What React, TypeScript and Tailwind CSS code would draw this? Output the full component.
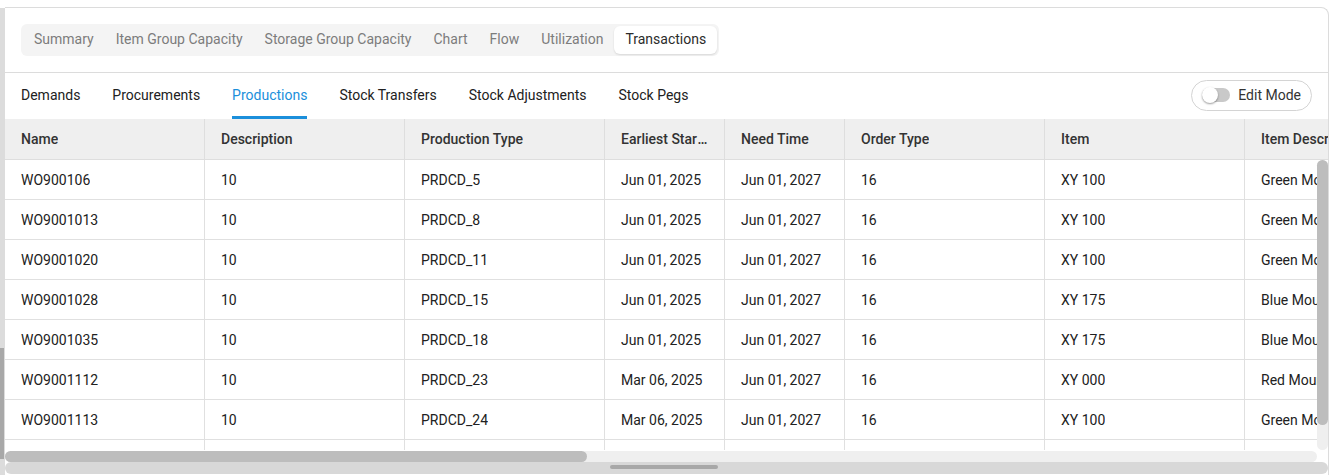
import React from "react";

const topTabs = ["Summary", "Item Group Capacity", "Storage Group Capacity", "Chart", "Flow", "Utilization", "Transactions"];
const subTabs = ["Demands", "Procurements", "Productions", "Stock Transfers", "Stock Adjustments", "Stock Pegs"];

const columns = [
  { label: "Name", width: "w-[200px]" },
  { label: "Description", width: "w-[200px]" },
  { label: "Production Type", width: "w-[200px]" },
  { label: "Earliest Start Time", width: "w-[120px]" },
  { label: "Need Time", width: "w-[120px]" },
  { label: "Order Type", width: "w-[200px]" },
  { label: "Item", width: "w-[200px]" },
  { label: "Item Description", width: "w-[200px]" },
];

const rows = [
  ["WO900106", "10", "PRDCD_5", "Jun 01, 2025", "Jun 01, 2027", "16", "XY 100", "Green Mountain Bike"],
  ["WO9001013", "10", "PRDCD_8", "Jun 01, 2025", "Jun 01, 2027", "16", "XY 100", "Green Mountain Bike"],
  ["WO9001020", "10", "PRDCD_11", "Jun 01, 2025", "Jun 01, 2027", "16", "XY 100", "Green Mountain Bike"],
  ["WO9001028", "10", "PRDCD_15", "Jun 01, 2025", "Jun 01, 2027", "16", "XY 175", "Blue Mountain Bike"],
  ["WO9001035", "10", "PRDCD_18", "Jun 01, 2025", "Jun 01, 2027", "16", "XY 175", "Blue Mountain Bike"],
  ["WO9001112", "10", "PRDCD_23", "Mar 06, 2025", "Jun 01, 2027", "16", "XY 000", "Red Mountain Bike"],
  ["WO9001113", "10", "PRDCD_24", "Mar 06, 2025", "Jun 01, 2027", "16", "XY 100", "Green Mountain Bike"],
  ["WO9001114", "10", "PRDCD_25", "Mar 06, 2025", "Jun 01, 2027", "16", "XY 100", "Green Mountain Bike"],
];

export default function App() {
  return (
    <div className="h-[475px] w-[1333px] overflow-hidden bg-white pt-[7px] font-['Roboto',sans-serif] text-sm">
      <div className="flex h-[468px]">
        {/* page scrollbar on the left */}
        <div className="mt-px flex h-[467px] w-[5px] flex-col bg-[#dcdcdc]">
          <div className="mt-[340px] h-[111px] w-[4px] bg-[#a8a8a8]" />
        </div>

        <div className="flex w-[1324px] flex-col rounded-tr-lg border-t border-r border-[#dcdcdc]">
          {/* top tabs */}
          <div className="border-b border-[#dcdcdc] px-4 py-4">
            <div className="flex h-8 w-fit items-center rounded-md bg-[#f4f4f4] px-[2px]">
              {topTabs.map((tab) =>
                tab === "Transactions" ? (
                  <div key={tab} className="flex h-7 items-center rounded-md bg-white px-[11px] pb-[2px] text-[#2b2b2b] shadow-[0_1px_2px_rgba(0,0,0,0.12)]">
                    {tab}
                  </div>
                ) : (
                  <div key={tab} className="flex h-7 items-center px-[11px] pb-[2px] text-[#7c7c7c]">
                    {tab}
                  </div>
                )
              )}
            </div>
          </div>

          {/* sub tabs */}
          <div className="flex h-[46px] items-center justify-between pr-4">
            <div className="flex h-full">
              {subTabs.map((tab) => (
                <div key={tab} className="flex h-full px-4">
                  <span
                    className={`flex h-full items-center border-b-[3px] ${
                      tab === "Productions" ? "border-[#1b8fdb] text-[#1b8fdb]" : "border-transparent text-[#212121]"
                    }`}
                  >
                    {tab}
                  </span>
                </div>
              ))}
            </div>
            <div className="mb-[2px] flex h-[31px] items-center gap-2 rounded-full border border-[#d4d4d4] px-[10px] text-[#333]">
              <div className="flex h-[14px] w-[28px] items-center rounded-full bg-[#c9c9c9]">
                <div className="h-[16px] w-[16px] rounded-full bg-white shadow-[0_1px_2px_rgba(0,0,0,0.4)]" />
              </div>
              <span>Edit Mode</span>
            </div>
          </div>

          {/* table */}
          <div className="relative flex h-[343px] flex-col">
            <div className="h-[331px] overflow-hidden">
              <div className="flex h-[41px] w-max border-b border-[#dedede] bg-[#efefef] font-medium text-[#333]">
                {columns.map((col, i) => (
                  <div
                    key={col.label}
                    className={`${col.width} flex shrink-0 items-center px-4 ${i < columns.length - 1 ? "border-r border-[#dedede]" : ""}`}
                  >
                    <span className={i === columns.length - 1 ? "whitespace-nowrap" : "truncate"}>{col.label}</span>
                  </div>
                ))}
              </div>
              {rows.map((row) => (
                <div key={row[0]} className="flex h-10 w-max border-b border-[#e0e0e0] text-[#212121]">
                  {row.map((cell, i) => (
                    <div
                      key={i}
                      className={`${columns[i].width} flex shrink-0 items-center px-4 ${i < row.length - 1 ? "border-r border-[#e0e0e0]" : ""}`}
                    >
                      <span className="truncate">{cell}</span>
                    </div>
                  ))}
                </div>
              ))}
            </div>
            {/* horizontal scrollbar */}
            <div className="h-[12px] w-[1312px] pt-px">
              <div className="h-[11px] rounded-full bg-[#efefef]">
                <div className="h-[11px] w-[582px] rounded-full bg-[#bdbdbd]" />
              </div>
            </div>
            {/* vertical scrollbar, overlays the rows */}
            <div className="absolute top-[41px] right-0 bottom-[12px] w-[11px] rounded-full bg-[#efefef]">
              <div className="h-[265px] rounded-full bg-[#bdbdbd]" />
            </div>
          </div>

          {/* outer horizontal scrollbar */}
          <div className="flex h-[12px] items-start rounded-full bg-[#d8d8d8] pt-[3px]">
            <div className="ml-[605px] h-[4px] w-[108px] rounded-full bg-[#a8a8a8]" />
          </div>
        </div>
      </div>
    </div>
  );
}
